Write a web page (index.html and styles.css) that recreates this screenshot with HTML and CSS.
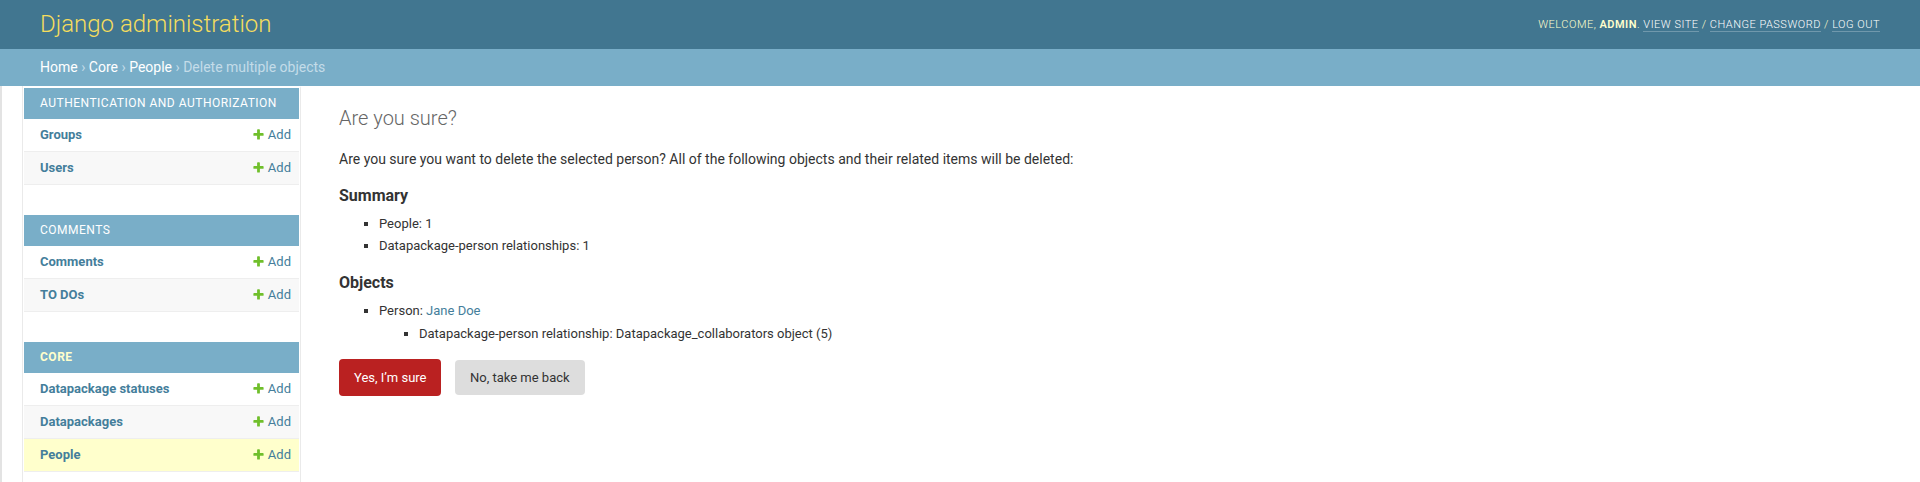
FILE: index.html
```html
<!DOCTYPE html>
<html lang="en">
<head>
<meta charset="utf-8">
<title>Are you sure? | Django site admin</title>
<link rel="stylesheet" href="styles.css">
</head>
<body>
<div class="container">
  <header class="header">
    <div class="branding"><h1 class="site-name">Django administration</h1></div>
    <div class="user-tools">
      Welcome, <strong>admin</strong>.
      <a href="#">View site</a> /
      <a href="#">Change password</a> /
      <a href="#">Log out</a>
    </div>
  </header>
  <div class="breadcrumbs">
    <a href="#">Home</a> › <a href="#">Core</a> › <a href="#">People</a> › Delete multiple objects
  </div>
  <div class="main">
    <button class="toggle-nav-sidebar" aria-label="Toggle navigation"></button>
    <nav class="nav-sidebar">
      <div class="module">
        <table>
          <caption><a class="section" href="#">Authentication and Authorization</a></caption>
          <tr class="row1"><th><a href="#">Groups</a></th><td><a class="addlink" href="#">Add</a></td></tr>
          <tr class="row2"><th><a href="#">Users</a></th><td><a class="addlink" href="#">Add</a></td></tr>
        </table>
      </div>
      <div class="module">
        <table>
          <caption><a class="section" href="#">Comments</a></caption>
          <tr class="row1"><th><a href="#">Comments</a></th><td><a class="addlink" href="#">Add</a></td></tr>
          <tr class="row2"><th><a href="#">TO DOs</a></th><td><a class="addlink" href="#">Add</a></td></tr>
        </table>
      </div>
      <div class="module current-app">
        <table>
          <caption><a class="section" href="#">Core</a></caption>
          <tr class="row1"><th><a href="#">Datapackage statuses</a></th><td><a class="addlink" href="#">Add</a></td></tr>
          <tr class="row2"><th><a href="#">Datapackages</a></th><td><a class="addlink" href="#">Add</a></td></tr>
          <tr class="current-model"><th><a href="#">People</a></th><td><a class="addlink" href="#">Add</a></td></tr>
        </table>
      </div>
    </nav>
    <div class="content">
      <h1>Are you sure?</h1>
      <p>Are you sure you want to delete the selected person? All of the following objects and their related items will be deleted:</p>
      <h2>Summary</h2>
      <ul>
        <li>People: 1</li>
        <li>Datapackage-person relationships: 1</li>
      </ul>
      <h2>Objects</h2>
      <ul>
        <li>Person: <a href="#">Jane Doe</a>
          <ul>
            <li>Datapackage-person relationship: Datapackage_collaborators object (5)</li>
          </ul>
        </li>
      </ul>
      <form class="confirm-form">
        <div>
          <button type="button" class="submit-delete">Yes, I’m sure</button>
          <a href="#" class="cancel-link">No, take me back</a>
        </div>
      </form>
    </div>
  </div>
</div>
</body>
</html>
```
FILE: styles.css
```css
html, body {
  margin: 0;
  padding: 0;
}
body {
  font-size: 14px;
  font-family: Roboto, "DejaVu Sans", Arial, sans-serif;
  color: #333;
  background: #fff;
}
a {
  color: #447e9b;
  text-decoration: none;
}
.container {
  display: flex;
  flex-direction: column;
  height: 100vh;
  overflow: hidden;
}
.header {
  display: flex;
  justify-content: space-between;
  align-items: center;
  padding: 10px 40px;
  background: #417690;
  color: #ffc;
  flex: 0 0 auto;
}
.site-name {
  margin: 0 20px 0 0;
  padding: 0;
  font-weight: 300;
  font-size: 24px;
  line-height: 29px;
  color: #f5dd5d;
}
.user-tools {
  font-weight: 300;
  font-size: 11px;
  letter-spacing: 0.5px;
  text-transform: uppercase;
  text-align: right;
  color: #ffc;
}
.user-tools strong {
  font-weight: 600;
}
.user-tools a {
  color: #fff;
  border-bottom: 1px solid rgba(255, 255, 255, 0.25);
}
.breadcrumbs {
  background: #79aec8;
  padding: 10px 40px;
  font-size: 14px;
  line-height: 17px;
  color: #c4dce8;
  flex: 0 0 auto;
}
.breadcrumbs a {
  color: #fff;
}
.main {
  display: flex;
  flex: 1 1 auto;
  min-height: 0;
}
.toggle-nav-sidebar {
  flex: 0 0 auto;
  width: 23px;
  margin: 0;
  padding: 0;
  border: 0;
  border-left: 2px solid #e3e3e3;
  border-right: 1px solid #eaeaea;
  background: #fff;
  box-sizing: border-box;
}
.nav-sidebar {
  flex: 0 0 275px;
  padding: 0 1px;
  border-top: 2px solid transparent;
  border-right: 1px solid #eaeaea;
  background: #fff;
}
.module {
  margin-bottom: 30px;
  background: #fff;
}
.module table {
  width: 100%;
  border-collapse: collapse;
}
.module caption {
  padding: 8px 8px 8px 16px;
  font-size: 12px;
  line-height: 15px;
  font-weight: 400;
  letter-spacing: 0.5px;
  text-transform: uppercase;
  text-align: left;
  background: #79aec8;
  color: #fff;
}
.module caption .section {
  color: #fff;
}
.current-app caption .section {
  color: #ffc;
  font-weight: bold;
}
.module th,
.module td {
  font-size: 13px;
  line-height: 16px;
  border-bottom: 1px solid #eee;
  vertical-align: top;
  padding: 8px;
}
.module th {
  width: 100%;
  padding-left: 16px;
  text-align: left;
  font-weight: 700;
}
.module td {
  white-space: nowrap;
}
.row1 {
  background: #fff;
}
.row2 {
  background: #f8f8f8;
}
.current-model {
  background: #ffc;
}
.addlink {
  padding-left: 16px;
  background-image: url("data:image/svg+xml,%3Csvg xmlns='http://www.w3.org/2000/svg' width='13' height='13' viewBox='0 0 1792 1792'%3E%3Cpath fill='%2370bf2b' d='M1600 796v192q0 40-28 68t-68 28h-416v416q0 40-28 68t-68 28h-192q-40 0-68-28t-28-68v-416h-416q-40 0-68-28t-28-68v-192q0-40 28-68t68-28h416v-416q0-40 28-68t68-28h192q40 0 68 28t28 68v416h416q40 0 68 28t28 68z'/%3E%3C/svg%3E");
  background-repeat: no-repeat;
  background-position: 0 1px;
}
.content {
  flex: 1 1 auto;
  padding: 20px 40px 20px 38px;
}
.content h1 {
  margin: 0 0 20px;
  font-weight: 300;
  font-size: 20px;
  line-height: 24px;
  color: #666;
}
.content h2 {
  font-size: 16px;
  margin: 1em 0 0.5em 0;
  color: #333;
}
.content p {
  margin: 0.2em 0 0.8em 0;
  padding: 0;
  line-height: 140%;
}
.content ul {
  margin: 0.2em 0 0.8em 0;
  padding-left: 40px;
}
.content li {
  list-style-type: square;
  padding: 1px 0;
  font-size: 13px;
  line-height: 20px;
}
.content li ul {
  margin-bottom: 0;
}
.confirm-form {
  margin: 0;
}
.submit-delete {
  margin: 2px 0;
  vertical-align: middle;
  background: #ba2121;
  border: none;
  border-radius: 4px;
  padding: 10px 15px;
  height: 37px;
  line-height: 15px;
  color: #fff;
  font-family: Roboto, "DejaVu Sans", Arial, sans-serif;
  font-size: 13px;
  font-weight: 400;
  cursor: pointer;
}
.cancel-link {
  display: inline-block;
  vertical-align: middle;
  height: 15px;
  line-height: 15px;
  background: #ddd;
  border-radius: 4px;
  padding: 10px 15px;
  color: #333;
  margin: 0 0 0 10px;
  font-size: 13px;
}
```
